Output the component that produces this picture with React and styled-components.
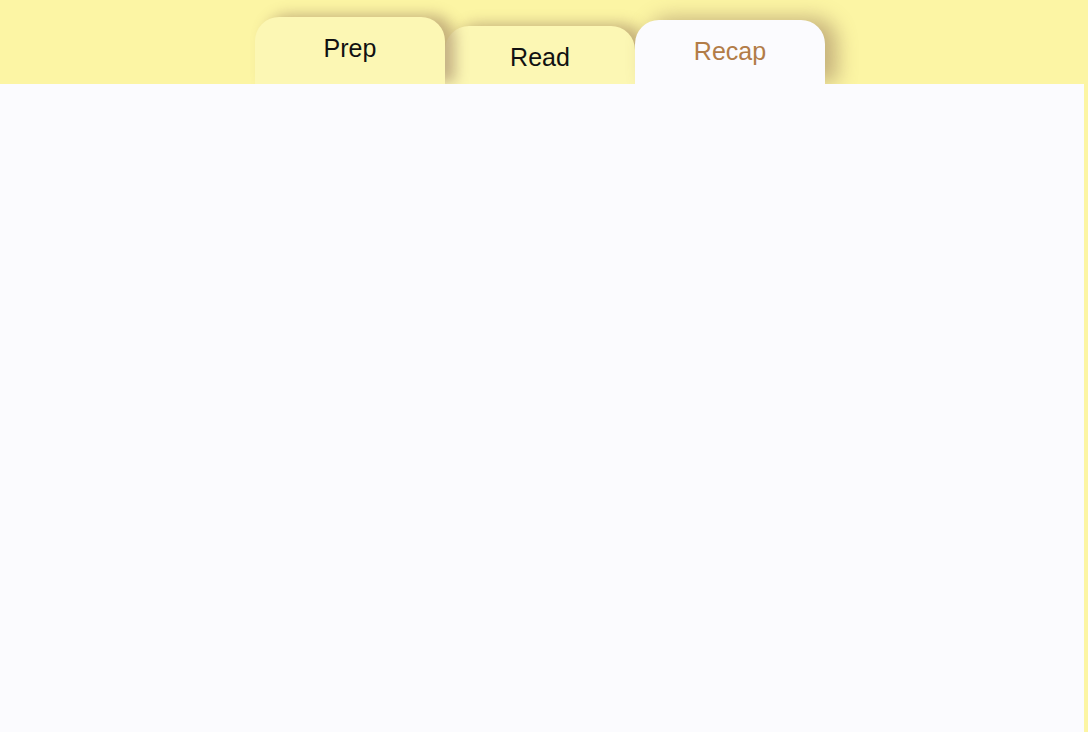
import React, { useState } from 'react'
import styled, { createGlobalStyle } from 'styled-components'

const GlobalStyle = createGlobalStyle`
    html, body {
        margin: 0;
        padding: 0;
        height: 100%;
    }
    body {
        background: #fcf5a4;
        font-family: "Liberation Sans", Arial, Helvetica, sans-serif;
    }
    #root {
        height: 100%;
    }
`

const Page = styled.div`
    min-height: 100vh;
    display: flex;
    flex-direction: column;
    background: #fcf5a4;
    overflow: hidden;
`

const TabBar = styled.div`
    display: flex;
    align-items: flex-end;
    height: 84px;
    padding-left: 255px;
`

const Tab = styled.button`
    position: relative;
    z-index: ${p => p.$z};
    width: 190px;
    height: ${p => p.$height}px;
    margin: 0;
    padding: 19px 0 0;
    border: none;
    border-radius: 24px 24px 0 0;
    display: flex;
    justify-content: center;
    align-items: flex-start;
    font-family: "Liberation Sans", Arial, Helvetica, sans-serif;
    font-size: 25px;
    line-height: 25px;
    cursor: pointer;
    color: ${p => p.$active ? '#b27c47' : '#111'};
    background: ${p => p.$active ? '#fbfbfe' : '#fcf7b4'};
    box-shadow: ${p => p.$active
        ? '12px -2px 20px rgba(130, 95, 75, 0.45)'
        : '10px -2px 14px rgba(130, 95, 75, 0.45)'};
`

const Panel = styled.div`
    position: relative;
    z-index: 5;
    flex: 1;
    margin-right: 4px;
    background: #fbfbfe;
`

const tabs = [
    { label: 'Prep', height: 67, z: 3 },
    { label: 'Read', height: 58, z: 2 },
    { label: 'Recap', height: 64, z: 4 },
]

export default function App() {
    const [active, setActive] = useState('Recap')

    return (
        <>
            <GlobalStyle />
            <Page>
                <TabBar>
                    {tabs.map(t => (
                        <Tab
                            key={t.label}
                            $height={t.height}
                            $z={t.z}
                            $active={active === t.label}
                            onClick={() => setActive(t.label)}
                        >
                            {t.label}
                        </Tab>
                    ))}
                </TabBar>
                <Panel />
            </Page>
        </>
    )
}
